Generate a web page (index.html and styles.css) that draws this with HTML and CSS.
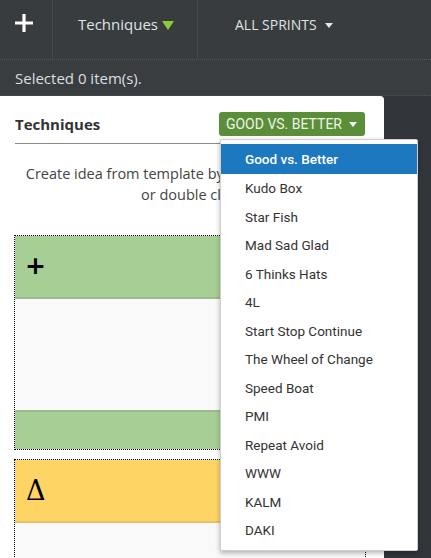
FILE: index.html
```html
<!DOCTYPE html>
<html>
<head>
<meta charset="utf-8">
<link rel="stylesheet" href="styles.css">
</head>
<body>
<header class="navbar">
  <div class="nav-add">
    <svg width="18" height="18" viewBox="0 0 18 18"><path d="M9 0V18M0 9H18" stroke="#fff" stroke-width="3.2"/></svg>
  </div>
  <div class="nav-tech">Techniques <span class="tri-green"></span></div>
  <div class="nav-sprints">ALL SPRINTS <span class="caret-white"></span></div>
</header>
<div class="selbar">Selected 0 item(s).</div>
<div class="main">
  <section class="panel">
    <div class="panel-head">
      <h2 class="panel-title">Techniques</h2>
      <button class="btn-green">GOOD VS. BETTER <span class="caret-btn"></span></button>
    </div>
    <p class="hint">Create idea from template by drag and drop item or double click.</p>
    <div class="col col-green">
      <div class="col-head"><span class="sym-plus">+</span></div>
      <div class="col-body"></div>
      <div class="col-foot"></div>
    </div>
    <div class="col col-yellow">
      <div class="col-head"><span class="sym-delta">Δ</span></div>
      <div class="col-body"></div>
    </div>
  </section>
</div>
<ul class="dropdown">
  <li class="active">Good vs. Better</li>
  <li>Kudo Box</li>
  <li>Star Fish</li>
  <li>Mad Sad Glad</li>
  <li>6 Thinks Hats</li>
  <li>4L</li>
  <li>Start Stop Continue</li>
  <li>The Wheel of Change</li>
  <li>Speed Boat</li>
  <li>PMI</li>
  <li>Repeat Avoid</li>
  <li>WWW</li>
  <li>KALM</li>
  <li>DAKI</li>
</ul>
</body>
</html>
```
FILE: styles.css
```css
html, body {
  margin: 0;
  padding: 0;
  height: 558px;
  overflow: hidden;
}
body {
  width: 431px;
  background: #32363a;
  font-family: "Open Sans", "Liberation Sans", sans-serif;
  position: relative;
}
.navbar {
  display: flex;
  height: 59px;
  background: #383c3f;
  border-bottom: 1px dotted #55595c;
}
.nav-add {
  width: 53px;
  border-right: 1px solid #44484b;
  display: flex;
  align-items: center;
  padding-left: 15px;
  box-sizing: border-box;
  padding-bottom: 14px;
}
.nav-add svg { display: block; }
.nav-tech {
  width: 145px;
  border-right: 1px solid #44484b;
  display: flex;
  align-items: center;
  padding-left: 25px;
  box-sizing: border-box;
  color: #dfe4e4;
  font-size: 15px;
  padding-bottom: 11px;
}
.tri-green {
  display: inline-block;
  width: 0;
  height: 0;
  border-left: 6px solid transparent;
  border-right: 6px solid transparent;
  border-top: 9px solid #8ccc34;
  margin-left: 4px;
  margin-top: 2px;
}
.nav-sprints {
  display: flex;
  align-items: center;
  padding-left: 37px;
  color: #dfe4e4;
  font-size: 14px;
  padding-bottom: 11px;
}
.caret-white {
  display: inline-block;
  width: 0;
  height: 0;
  border-left: 4.5px solid transparent;
  border-right: 4.5px solid transparent;
  border-top: 5px solid #e6e6e6;
  margin-left: 8px;
  margin-top: 2px;
}
.selbar {
  height: 36px;
  line-height: 36px;
  padding-left: 15px;
  color: #dcdfe0;
  font-size: 15px;
  background: #393d40;
  border-bottom: 1px dotted #4d5154;
  box-sizing: border-box;
}
.main {
  display: flex;
}
.panel {
  width: 384px;
  height: 462px;
  overflow: hidden;
  background: #fff;
  border-top-right-radius: 4px;
  padding: 0 15px;
  box-sizing: border-box;
}
.panel-head {
  display: flex;
  justify-content: space-between;
  align-items: center;
  padding-top: 16px;
  padding-bottom: 7px;
  border-bottom: 1px solid #8a8a8a;
}
.panel-title {
  margin: 0;
  font-size: 15px;
  font-weight: 700;
  color: #333;
  line-height: 24px;
}
.btn-green {
  height: 24px;
  margin-right: 4px;
  padding: 0 8px 0 7px;
  border: none;
  border-radius: 3px;
  background: #5a8e38;
  color: #eef4e6;
  font-family: Roboto, "Liberation Sans", sans-serif;
  font-size: 14px;
  display: flex;
  align-items: center;
}
.caret-btn {
  display: inline-block;
  width: 0;
  height: 0;
  border-left: 4.5px solid transparent;
  border-right: 4.5px solid transparent;
  border-top: 5px solid #fff;
  margin-left: 7px;
}
.hint {
  margin: 19px 0 30px;
  padding: 0 8px;
  text-align: center;
  color: #444;
  font-size: 14.5px;
  line-height: 21px;
}
.col {
  margin-left: -1px;
  width: 352px;
  border: 1px dotted #000;
  box-sizing: border-box;
}
.col-head {
  height: 61px;
  display: flex;
  align-items: center;
  padding-left: 10px;
}
.col-body {
  height: 111px;
  background: #f9f9f9;
}
.col-foot {
  height: 37px;
}
.col-green .col-head,
.col-green .col-foot {
  background: #a7cf95;
}
.col-green .col-head { border-bottom: 2px solid #9dbb8c; }
.col-green .col-foot { border-top: 2px solid #9dbb8c; }
.col-yellow {
  margin-top: 9px;
}
.col-yellow .col-head {
  background: #fed565;
  border-bottom: 2px solid #e3c465;
}
.sym-plus {
  font-family: "DejaVu Sans", sans-serif;
  font-weight: 700;
  font-size: 25px;
  color: #000;
  line-height: 1;
  margin-top: -2px;
}
.sym-delta {
  font-family: "DejaVu Serif", serif;
  font-size: 27px;
  color: #000;
  line-height: 1;
  margin-left: 1px;
}
.dropdown {
  position: absolute;
  left: 220px;
  top: 139px;
  width: 198px;
  box-sizing: border-box;
  margin: 0;
  padding: 4px 0 5px;
  list-style: none;
  background: #fff;
  border: 1px solid #cfcfcf;
  border-radius: 2px;
  box-shadow: 0 2px 5px rgba(0,0,0,0.3);
  font-family: Roboto, "Liberation Sans", sans-serif;
  font-size: 13.5px;
  color: #333;
}
.dropdown li {
  height: 28.5px;
  line-height: 28.5px;
  padding-left: 24px;
}
.dropdown li.active {
  background: #1c78bf;
  color: #fff;
  font-weight: 500;
  height: 30px;
  line-height: 30px;
}
```
